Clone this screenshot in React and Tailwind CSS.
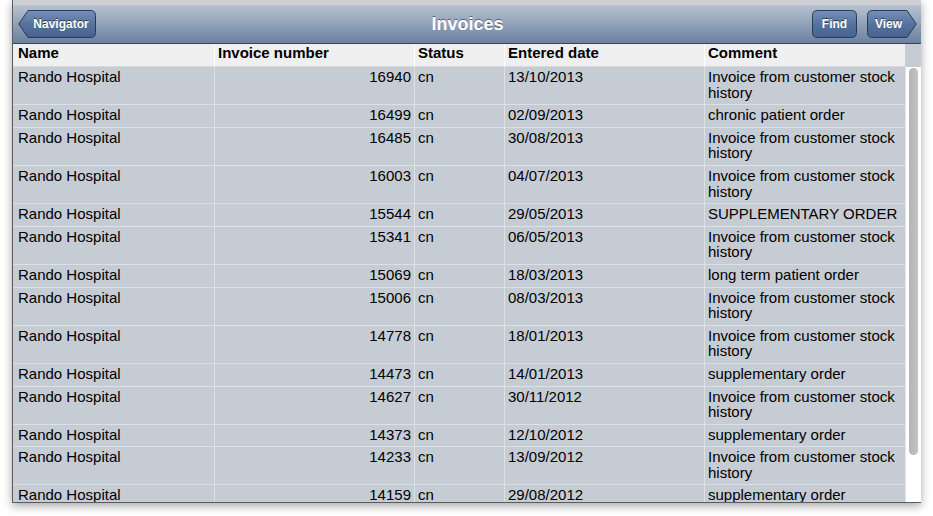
const LONG = "Invoice from customer stock history";

const invoices = [
  { num: 16940, date: "13/10/2013", comment: LONG },
  { num: 16499, date: "02/09/2013", comment: "chronic patient order" },
  { num: 16485, date: "30/08/2013", comment: LONG },
  { num: 16003, date: "04/07/2013", comment: LONG },
  { num: 15544, date: "29/05/2013", comment: "SUPPLEMENTARY ORDER" },
  { num: 15341, date: "06/05/2013", comment: LONG },
  { num: 15069, date: "18/03/2013", comment: "long term patient order" },
  { num: 15006, date: "08/03/2013", comment: LONG },
  { num: 14778, date: "18/01/2013", comment: LONG },
  { num: 14473, date: "14/01/2013", comment: "supplementary order" },
  { num: 14627, date: "30/11/2012", comment: LONG },
  { num: 14373, date: "12/10/2012", comment: "supplementary order" },
  { num: 14233, date: "13/09/2012", comment: LONG },
  { num: 14159, date: "29/08/2012", comment: "supplementary order" },
];

const cols = "grid grid-cols-[202px_200px_90px_200px_200px]";
const btnText = "relative text-white text-[12px] font-bold [text-shadow:0_-1px_0_rgba(0,0,0,0.55)]";

function ButtonShape({ id, d, w }) {
  return (
    <svg className="absolute inset-0" width={w} height="28" viewBox={`0 0 ${w} 28`}>
      <defs>
        <linearGradient id={id} x1="0" y1="0" x2="0" y2="1">
          <stop offset="0" stopColor="#7590b8" />
          <stop offset="0.5" stopColor="#56739f" />
          <stop offset="1" stopColor="#46628f" />
        </linearGradient>
      </defs>
      <path d={d} fill={`url(#${id})`} stroke="#2b3a54" strokeWidth="1" />
    </svg>
  );
}

function NavigatorButton() {
  return (
    <div className="relative w-[78px] h-[28px] flex items-center justify-center pl-[8px]">
      <ButtonShape
        id="gNav"
        w={78}
        d="M0.8 14 L10 0.5 H72.5 Q77.5 0.5 77.5 5.5 V22.5 Q77.5 27.5 72.5 27.5 H10 Z"
      />
      <span className={btnText}>Navigator</span>
    </div>
  );
}

function FindButton() {
  return (
    <div className="relative w-[45px] h-[28px] flex items-center justify-center">
      <ButtonShape
        id="gFind"
        w={45}
        d="M5.5 0.5 H39.5 Q44.5 0.5 44.5 5.5 V22.5 Q44.5 27.5 39.5 27.5 H5.5 Q0.5 27.5 0.5 22.5 V5.5 Q0.5 0.5 5.5 0.5 Z"
      />
      <span className={btnText}>Find</span>
    </div>
  );
}

function ViewButton() {
  return (
    <div className="relative w-[50px] h-[28px] flex items-center justify-center pr-[7px]">
      <ButtonShape
        id="gView"
        w={50}
        d="M5.5 0.5 H40 L49.2 14 L40 27.5 H5.5 Q0.5 27.5 0.5 22.5 V5.5 Q0.5 0.5 5.5 0.5 Z"
      />
      <span className={btnText}>View</span>
    </div>
  );
}

export default function App() {
  return (
    <div className="w-[933px] h-[516px] bg-white overflow-hidden font-['Liberation_Sans',Arial,sans-serif] text-black">
      <div className="ml-[12px] w-[909px] h-[503px] flex flex-col border-l border-b border-[#5c5c5c] shadow-[0_3px_9px_rgba(0,0,0,0.35)] overflow-hidden">
        <div className="h-[4px] shrink-0 bg-[#d0d0d0]" />

        {/* toolbar */}
        <div className="h-[40px] shrink-0 grid grid-cols-[1fr_auto_1fr] items-center px-[5px] pr-[4px] border-t border-[#cdd5df] border-b border-b-[#3a4558] bg-linear-to-b from-[#b8c3d1] to-[#6b81a0]">
          <div className="flex">
            <NavigatorButton />
          </div>
          <div className="text-white text-[18px] font-bold [text-shadow:0_-1px_0_rgba(0,0,0,0.45)]">
            Invoices
          </div>
          <div className="flex justify-end gap-[10px]">
            <FindButton />
            <ViewButton />
          </div>
        </div>

        {/* table + scrollbar */}
        <div className="flex flex-1 min-h-0">
          <div className="w-[892px] flex flex-col overflow-hidden bg-[#c6ccd4]">
            <div className={`${cols} h-[23px] shrink-0 bg-[#efefef] border-b border-[#d6d9dd] font-bold text-[15px] leading-[16px]`}>
              <div className="pl-[5px] pt-[1px] border-r border-white">Name</div>
              <div className="pl-[3px] pt-[1px] border-r border-white">Invoice number</div>
              <div className="pl-[3px] pt-[1px] border-r border-white">Status</div>
              <div className="pl-[3px] pt-[1px] border-r border-white">Entered date</div>
              <div className="pl-[3px] pt-[1px]">Comment</div>
            </div>
            {invoices.map((r) => (
              <div
                key={r.num}
                className={`${cols} shrink-0 border-b border-[#dde1e6] text-[15px] leading-[15.6px]`}
              >
                <div className="pl-[5px] pt-[2px] pb-[4px] border-r border-[#dde1e6]">Rando Hospital</div>
                <div className="pr-[3px] pt-[2px] pb-[4px] text-right border-r border-[#dde1e6]">{r.num}</div>
                <div className="pl-[3px] pt-[2px] pb-[4px] border-r border-[#dde1e6]">cn</div>
                <div className="pl-[3px] pt-[2px] pb-[4px] border-r border-[#dde1e6]">{r.date}</div>
                <div className="pl-[3px] pt-[2px] pb-[4px]">{r.comment}</div>
              </div>
            ))}
          </div>

          {/* scrollbar */}
          <div className="w-[16px] shrink-0 flex flex-col">
            <div className="h-[23px] shrink-0 bg-[#c6ccd4]" />
            <div className="flex-1 bg-white border-l border-[#e4e4e4] pl-[3px] pr-[3px] pt-[1px]">
              <div className="w-[9px] h-[387px] rounded-full bg-linear-to-r from-[#b4b4b4] to-[#c4c4c4]" />
            </div>
          </div>
        </div>
      </div>
    </div>
  );
}
